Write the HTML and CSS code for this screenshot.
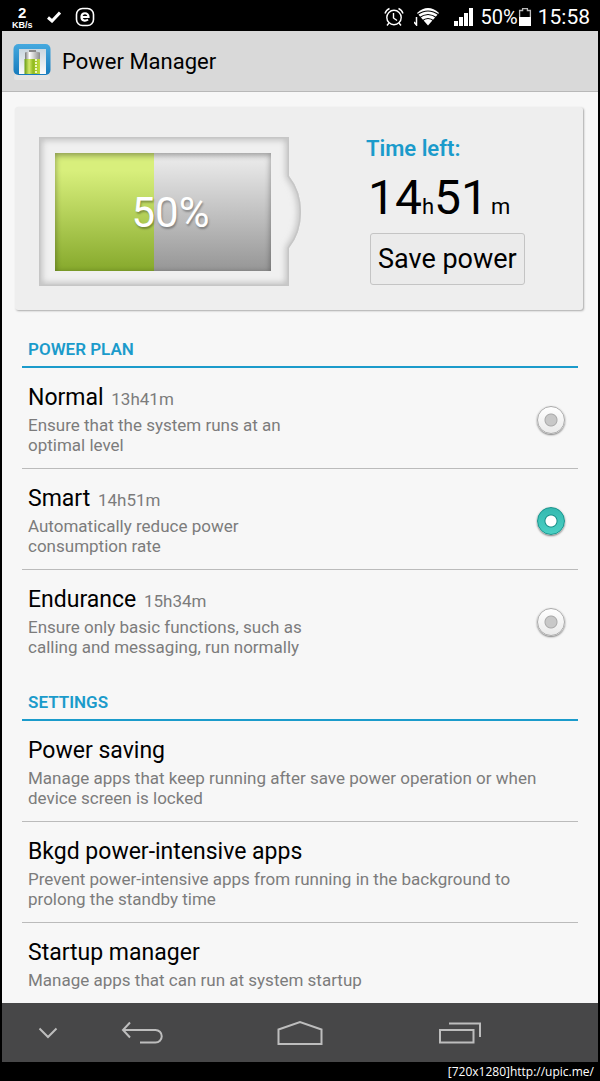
FILE: index.html
```html
<!DOCTYPE html>
<html lang="en">
<head>
    <meta charset="UTF-8">
    <meta name="viewport" content="width=device-width, initial-scale=1.0">
    <title>Power Manager</title>
    <link rel="stylesheet" href="styles.css">
</head>
<body>

    <!-- Status bar -->
    <div class="status-bar">
        <div class="status-left">
            <div class="speed"><b>2</b><span>KB/s</span></div>
            <svg width="14" height="12" viewBox="0 0 14 12"><path d="M1 6.5 5 10 13 1.5" fill="none" stroke="#fff" stroke-width="3"/></svg>
            <svg width="20" height="20" viewBox="0 0 20 20" fill="none" stroke="#fff"><rect x="1.5" y="1.5" width="17" height="17" rx="6" stroke-width="1.6"/><path d="M7 10h6.5c0-5-7-5-7 0 0 4 4 4.500 6.500 2.500" stroke-width="2.200"/></svg>
        </div>
        <div class="status-right">
            <svg width="20" height="20" viewBox="0 0 20 20" fill="none" stroke="#fff" stroke-width="1.4"><circle cx="10" cy="10.5" r="7.2"/><path d="M9.500 6v5l3.500 2.500M1 6.500Q2 3 5.500 1.500M19 6.500Q18 3 14.500 1.500M5 16l-2 2.500M15 16l2 2.500"/></svg>
            <svg class="wifi" width="26" height="18" viewBox="0 0 26 18"><path d="M3 5q11-10 22 0L14 17.500z" fill="#fff"/><path d="M3 7q11-8 22 0M5 10q9-7 18 0M8 13q6-5 12 0" fill="none" stroke="#000" stroke-width="1.2"/><path d="M2.500 9v8L0 14" fill="none" stroke="#fff" stroke-width="1.5"/></svg>
            <svg width="20" height="20" viewBox="0 0 20 20" fill="#fff"><path d="M0 14h4v5H0zM5 10h4v9H5zM10 6h4v13h-4zM15 1h4v18h-4z"/></svg>
            <span class="percent">50%</span>
            <svg width="14" height="20" viewBox="0 0 14 20"><path d="M1.600 10V3.500h3V1.600h4.800v1.900h3V10" fill="none" stroke="#bbb" stroke-width="1.3"/><path d="M1 10h12v9H1z" fill="#fff"/></svg>
            <span class="clock">15:58</span>
        </div>
    </div>

    <!-- Title bar -->
    <header>
        <svg width="40" height="40" viewBox="0 0 40 40">
            <defs>
                <linearGradient id="iconBlue" x2="0" y2="1"><stop stop-color="#45a9df"/><stop offset="1" stop-color="#167bbd"/></linearGradient>
                <linearGradient id="iconWhite" x2="0" y2="1"><stop stop-color="#c9d6df"/><stop offset="1" stop-color="#fbfbfb"/></linearGradient>
                <linearGradient id="iconGreen"><stop stop-color="#659b14"/><stop offset=".3" stop-color="#d5e96a"/><stop offset=".55" stop-color="#8fba20"/><stop offset="1" stop-color="#c1dc3c"/></linearGradient>
                <linearGradient id="iconMetal"><stop stop-color="#777"/><stop offset=".3" stop-color="#fff"/><stop offset="1" stop-color="#8b8b8b"/></linearGradient>
            </defs>
            <rect x="2" y="34" width="36" height="5" rx="2" fill="#e3e3e3"/>
            <rect x="1.5" y="3" width="37" height="31" rx="5" fill="url(#iconBlue)"/>
            <path d="M7 8h27v25H7z" fill="url(#iconWhite)"/>
            <path d="M13 11.500Q20 9 28 11.500V33H13z" fill="url(#iconMetal)"/>
            <path d="M17 9h7v2h-7z" fill="#888"/>
            <path d="M12.500 18h15.500v15H12.500z" fill="url(#iconGreen)"/>
            <path d="M24 18v14" stroke="#eef6c0" stroke-width="2" stroke-dasharray="2 1"/>
        </svg>
        <h1>Power Manager</h1>
    </header>

    <main>
        <!-- Battery overview -->
        <section class="overview">
            <div class="battery">
                <svg class="battery-shell" width="264" height="150" viewBox="0 0 264 150">
                    <defs>
                        <clipPath id="shellClip"><path d="M0 0h250v39q12 15 12 36t-12 36v38H0z"/></clipPath>
                        <filter id="soften"><feGaussianBlur stdDeviation="3"/></filter>
                    </defs>
                    <g clip-path="url(#shellClip)" fill="none">
                        <path d="M0 0h250v39q12 15 12 36t-12 36v38H0z" fill="#f0f0f0"/>
                        <path d="M0 0h250v39q12 15 12 36t-12 36v38H0z" stroke="#bbb" stroke-width="6" filter="url(#soften)"/>
                        <path d="M0 0h250v39q12 15 12 36t-12 36v38H0z" stroke="#c6c6c6" stroke-width="3"/>
                    </g>
                </svg>
                <div class="cell">
                    <div class="charge" style="width: 46%"></div>
                    <span class="level">50%</span>
                </div>
            </div>
            <div class="time-left">
                <h2>Time left:</h2>
                <p class="time">14<small>h</small>51<small class="minutes">m</small></p>
                <button type="button">Save power</button>
            </div>
        </section>

        <!-- Power plan -->
        <section class="group">
            <h2>POWER PLAN</h2>
            <label class="row plan">
                <span class="text">
                    <span class="name">Normal <small>13h41m</small></span>
                    <span class="desc">Ensure that the system runs at an optimal level</span>
                </span>
                <input type="radio" name="plan" value="normal">
            </label>
            <label class="row plan">
                <span class="text">
                    <span class="name">Smart <small>14h51m</small></span>
                    <span class="desc">Automatically reduce power consumption rate</span>
                </span>
                <input type="radio" name="plan" value="smart" checked>
            </label>
            <label class="row plan">
                <span class="text">
                    <span class="name">Endurance <small>15h34m</small></span>
                    <span class="desc">Ensure only basic functions, such as calling and messaging, run normally</span>
                </span>
                <input type="radio" name="plan" value="endurance">
            </label>
        </section>

        <!-- Settings -->
        <section class="group">
            <h2>SETTINGS</h2>
            <a class="row" href="#">
                <span class="text">
                    <span class="name">Power saving</span>
                    <span class="desc">Manage apps that keep running after save power operation or when device screen is locked</span>
                </span>
            </a>
            <a class="row" href="#">
                <span class="text">
                    <span class="name">Bkgd power-intensive apps</span>
                    <span class="desc">Prevent power-intensive apps from running in the background to prolong the standby time</span>
                </span>
            </a>
            <a class="row" href="#">
                <span class="text">
                    <span class="name">Startup manager</span>
                    <span class="desc">Manage apps that can run at system startup</span>
                </span>
            </a>
        </section>
    </main>

    <!-- Navigation keys -->
    <nav>
        <button type="button" aria-label="Hide"><svg width="20" height="24" viewBox="0 0 20 24"><path d="M1.500 7.500 10 16l8.500-8.500"/></svg></button>
        <button type="button" aria-label="Back"><svg width="42" height="24" viewBox="0 0 42 24"><path d="M9 1.500 2 9l7 7.500M2 9h32.500a6.200 6.200 0 0 1 0 12.500H19"/></svg></button>
        <button type="button" aria-label="Home"><svg width="46" height="26" viewBox="0 0 46 26"><path d="M1.500 9.500 23 2l21.500 7.500V24h-43z"/></svg></button>
        <button type="button" aria-label="Recent apps"><svg width="44" height="24" viewBox="0 0 44 24"><path d="M2 9h33.500v12.500H2zM11 2.500h31V16"/></svg></button>
    </nav>

    <footer>[720x1280]http://upic.me/</footer>

</body>
</html>
```
FILE: styles.css
```css
* {
    box-sizing: border-box;
}

body {
    margin: 0;
    padding: 0 2px;
    background-color: #000;
    color: #000;
    font-family: Roboto, Arial, sans-serif;
}

h1, h2, p {
    margin: 0;
    font-weight: normal;
}

svg {
    display: block;
    flex-shrink: 0;
}

/* Status bar */
.status-bar {
    display: flex;
    justify-content: space-between;
    height: 31px;
    padding: 3px 8px 0 10px;
    color: #fff;
}

.status-left,
.status-right {
    display: flex;
    align-items: center;
}

.status-left {
    gap: 14px;
}

.speed {
    display: flex;
    flex-direction: column;
    align-items: center;
    font-family: "Liberation Sans", Arial, sans-serif;
    font-size: 9px;
    font-weight: bold;
    line-height: 10px;
}

.speed b {
    font-size: 15px;
    line-height: 15px;
}

.wifi {
    margin: 0 14px 0 10px;
}

.percent {
    margin-left: 7px;
    font-size: 20px;
}

.clock {
    margin-left: 6px;
    font-size: 21px;
}

/* Title bar */
header {
    display: flex;
    align-items: center;
    gap: 10px;
    height: 61px;
    padding: 0 10px;
    background-color: #d9d9d9;
    border-bottom: 1px solid #b8b8b8;
}

h1 {
    font-size: 22px;
}

main {
    padding: 15px 15px 0 13px;
    background-color: #f7f7f7;
}

/* Battery overview */
.overview {
    display: flex;
    align-items: center;
    gap: 63px;
    height: 203px;
    margin-bottom: 7px;
    padding: 6px 24px 0;
    background-color: #eee;
    border-radius: 3px;
    box-shadow: 1px 1px 2px #aaa;
}

.battery {
    position: relative;
    padding: 16px 32px 16px 16px;
}

.battery-shell {
    position: absolute;
    top: 0;
    left: 0;
}

.cell {
    position: relative;
    width: 216px;
    height: 118px;
    background: linear-gradient(#eee, #969696);
}

.cell::after {
    content: "";
    position: absolute;
    inset: 0;
    box-shadow: inset 0 2px 6px rgba(0, 0, 0, 0.4);
}

.charge {
    height: 100%;
    background: linear-gradient(#d8ef7c 15%, #86a92c);
}

.level {
    position: absolute;
    inset: 0;
    z-index: 1;
    padding-left: 15px;
    color: #fff;
    font-size: 42px;
    line-height: 120px;
    text-align: center;
    text-shadow: 1px 2px 2px rgba(0, 0, 0, 0.3);
}

.time-left {
    padding-bottom: 3px;
}

.time-left h2 {
    color: #1b9bcb;
    font-size: 22px;
    font-weight: 600;
    line-height: 28px;
}

.time {
    padding-left: 2px;
    font-size: 48px;
    line-height: 70px;
    white-space: nowrap;
}

.time small {
    font-size: 22px;
    line-height: 1;
}

.time .minutes {
    margin-left: 3px;
}

.time-left button {
    display: block;
    height: 52px;
    margin-left: 4px;
    padding: 0 7px;
    background-color: #ebebeb;
    border: 1px solid #c4c4c4;
    border-radius: 3px;
    color: #000;
    font-family: inherit;
    font-size: 27px;
}

/* Lists */
.group {
    margin: 0 5px 0 7px;
}

.group h2 {
    padding: 22px 6px 7px;
    border-bottom: 2px solid #1b9bcb;
    color: #1b9bcb;
    font-size: 17px;
    font-weight: 600;
    line-height: 20px;
}

.row {
    display: flex;
    justify-content: space-between;
    align-items: center;
    padding: 16px 13px 13px 6px;
    border-bottom: 1px solid #bbb;
    color: #000;
    text-decoration: none;
}

.row:last-child {
    border-bottom: none;
}

.name,
.desc {
    display: block;
}

.name {
    margin-bottom: 3px;
    font-size: 23px;
    line-height: 28px;
}

.name small {
    margin-left: 2px;
    color: #7c7c7c;
    font-size: 17px;
    line-height: 1;
}

.desc {
    color: #7c7c7c;
    font-size: 17px;
    line-height: 20px;
}

.plan .desc {
    max-width: 300px;
}

.row input {
    appearance: none;
    flex-shrink: 0;
    width: 28px;
    height: 28px;
    margin: 0;
    background: radial-gradient(circle, #c8c8c8 5px, #aaa 6px, transparent 7px), linear-gradient(#fff, #eaeaea);
    border: 1px solid #ababab;
    border-radius: 50%;
    box-shadow: 0 1px 2px rgba(0, 0, 0, 0.5);
}

.row input:checked {
    background: radial-gradient(circle, #fff 5px, #188f88 6px, transparent 7px), linear-gradient(#35b9b0, #4bd0c4);
    border-color: #16938b;
}

/* Navigation keys */
nav {
    display: grid;
    grid-template-columns: 91px 97px 220px 100px 1fr;
    height: 59px;
    background-color: #474748;
}

nav button {
    display: flex;
    justify-content: center;
    align-items: center;
    padding: 0;
    background: none;
    border: none;
}

nav path {
    fill: none;
    stroke: #bdbdbd;
    stroke-width: 2;
}

footer {
    padding-right: 4px;
    color: #fff;
    font-family: "Open Sans", sans-serif;
    font-size: 12px;
    line-height: 19px;
    text-align: right;
}
```
